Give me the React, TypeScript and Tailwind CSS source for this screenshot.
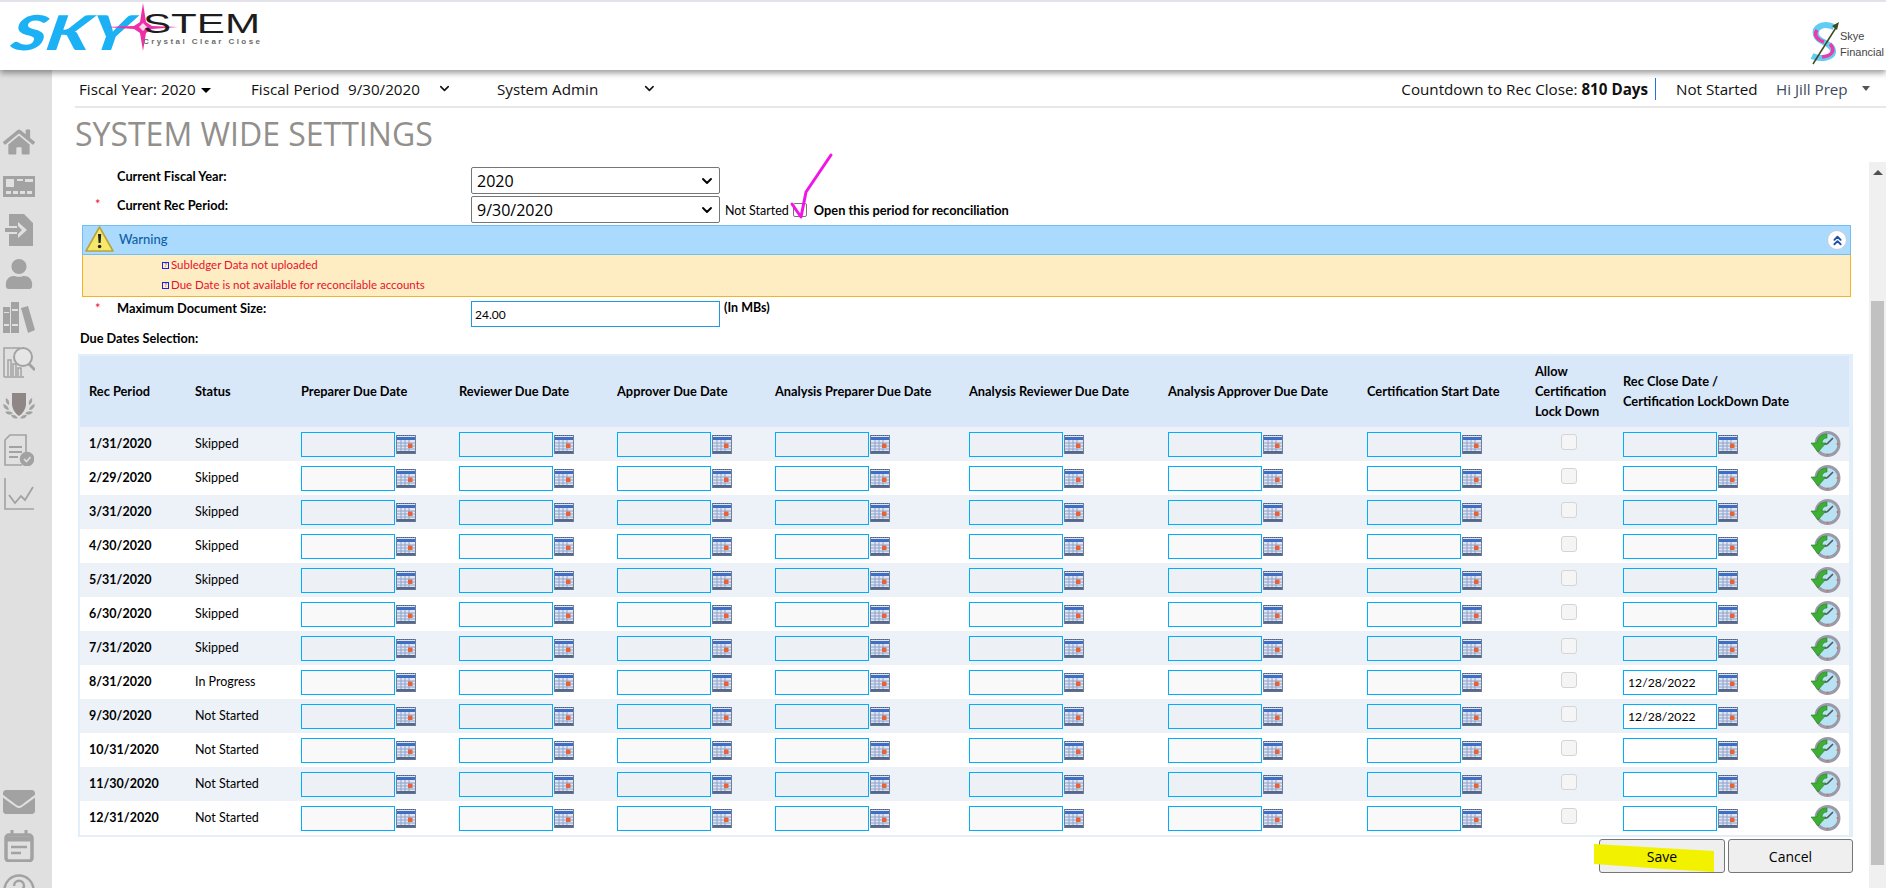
import { ChevronDown, ChevronsUp } from "lucide-react";
import { FaHome, FaUser, FaEnvelope } from "react-icons/fa";

const rows = [
  { period: "1/31/2020", status: "Skipped", close: "", closeOff: true },
  { period: "2/29/2020", status: "Skipped", close: "", closeOff: true },
  { period: "3/31/2020", status: "Skipped", close: "", closeOff: true },
  { period: "4/30/2020", status: "Skipped", close: "", closeOff: true },
  { period: "5/31/2020", status: "Skipped", close: "", closeOff: true },
  { period: "6/30/2020", status: "Skipped", close: "", closeOff: true },
  { period: "7/31/2020", status: "Skipped", close: "", closeOff: true },
  { period: "8/31/2020", status: "In Progress", close: "12/28/2022", closeOff: false },
  { period: "9/30/2020", status: "Not Started", close: "12/28/2022", closeOff: false },
  { period: "10/31/2020", status: "Not Started", close: "", closeOff: false },
  { period: "11/30/2020", status: "Not Started", close: "", closeOff: false },
  { period: "12/31/2020", status: "Not Started", close: "", closeOff: false },
];

const dateColumns = [0, 1, 2, 3, 4, 5, 6];

function SkyLogo() {
  return (
    <svg width="270" height="66" viewBox="0 0 270 66" className="ml-[6px] shrink-0 overflow-visible">
      <text x="12" y="48" fontFamily="Lato, sans-serif" fontWeight="900" fontStyle="italic" fontSize="48" fill="#1cb1f5" textLength="120" lengthAdjust="spacingAndGlyphs" transform="skewX(-10)">SKY</text>
      <polygon points="137,1 140,20 146,24 172,25 146,27 140,31 137,49 134,31 128,27 100,25 128,24 134,20" fill="#ee2fa8" />
      <polygon points="137,21 141,25 137,29 133,25" fill="#fbd3ec" />
      <text x="137" y="31" fontFamily="Liberation Sans, sans-serif" fontSize="27" fill="#1d1d1d" textLength="117" lengthAdjust="spacingAndGlyphs">STEM</text>
      <text x="137" y="42" fontFamily="Liberation Sans, sans-serif" fontSize="8" fontWeight="700" fill="#6b6b6b" textLength="117">Crystal Clear Close</text>
    </svg>
  );
}

function SkyeLogo() {
  return (
    <div className="flex items-center mt-[14px] w-[76px] shrink-0">
      <svg width="30" height="46" viewBox="0 0 30 46">
        <path d="M24 7 C12 2 4 8 6 15 C8 23 22 22 23 31 C24 38 10 40 2 36" fill="none" stroke="#62cdf3" strokeWidth="6" />
        <path d="M7 10 C3 16 8 20 14 22 M20 24 C26 30 22 36 12 37" fill="none" stroke="#ee3aa9" strokeWidth="3.5" />
        <path d="M3 44 L27 6" stroke="#3f4a22" strokeWidth="1.5" />
        <polygon points="29,2 22,6 27,10" fill="#3f4a22" />
      </svg>
      <div className="font-['Liberation_Sans',sans-serif] text-[11px] leading-[16px] text-[#444] pt-[1px]">
        <div>Skye</div>
        <div>Financial</div>
      </div>
    </div>
  );
}

function SideIcon({ children }: { children: React.ReactNode }) {
  return <div className="w-[32px] h-[32px] flex items-center justify-center text-[#a2a2a2]">{children}</div>;
}

function Sidebar() {
  return (
    <div className="w-[52px] shrink-0 bg-[#e0e0e0] flex flex-col pt-[56px] pl-[3px] gap-[12px] mb-[-18px]">
      <SideIcon><FaHome size={32} /></SideIcon>
      <SideIcon>
        <svg width="32" height="22" viewBox="0 0 32 22" fill="currentColor" className="mt-[2px]">
          <path d="M0 0h32v21H0z M3 3v8h8V3z M14 3v2h6V3z M22 3v3h8V3z M3 15v3h5v-3z M10 15v3h5v-3z M17 15v3h5v-3z M24 15v3h5v-3z" fillRule="evenodd" />
        </svg>
      </SideIcon>
      <SideIcon>
        <svg width="30" height="32" viewBox="0 0 30 32" fill="currentColor">
          <path d="M5 0h15l9 9v23H5V20h9v4l9-8-9-8v4H5z" />
          <path d="M1 14h12v-3l5 5-5 5v-3H1z" />
        </svg>
      </SideIcon>
      <SideIcon><FaUser size={30} /></SideIcon>
      <SideIcon>
        <svg width="32" height="32" viewBox="0 0 32 32" fill="currentColor">
          <path d="M0 5h7v26H0z M8 0h8v31H8z" />
          <path d="M18 6l7-2 7 24-7 3z" />
          <path d="M1 10h5v1H1z M1 22h5v2H1z M9 7h6v2H9z M9 22h6v2H9z" fill="#e0e0e0" />
        </svg>
      </SideIcon>
      <SideIcon>
        <svg width="32" height="32" viewBox="0 0 32 32" fill="none" stroke="currentColor" strokeWidth="1.5">
          <path d="M1 31V2h16" />
          <path d="M1 31h20" />
          <path d="M5 30V14h3v16M10 30V18h3v12M15 30V22h3v8" />
          <circle cx="20" cy="11" r="9" strokeWidth="2" fill="#e6e6e6" />
          <path d="M26 18l6 6" strokeWidth="3" />
        </svg>
      </SideIcon>
      <SideIcon>
        <svg width="32" height="26" viewBox="0 0 32 26" fill="currentColor">
          <path d="M9 0h14v12q-1 7-7 11q-6-4-7-11z" fill="#8f8686" />
          <path d="M3 5q4 2 3 7q-4-2-3-7z M0 11q5 1 6 6q-5 0-6-6z M2 19q4-2 8 1q-4 4-8-1z M8 22q4-1 7 3q-5 2-7-3z M29 5q-4 2-3 7q4-2 3-7z M32 11q-5 1-6 6q5 0 6-6z M30 19q-4-2-8 1q4 4 8-1z M24 22q-4-1-7 3q5 2 7-3z" />
        </svg>
      </SideIcon>
      <SideIcon>
        <svg width="30" height="32" viewBox="0 0 30 32" fill="none" stroke="currentColor" strokeWidth="1.6">
          <path d="M22 18V1H6L1 6v25h17" />
          <path d="M5 13h13M5 18h13M5 23h9" strokeWidth="2" />
          <circle cx="23" cy="25" r="6.5" fill="currentColor" />
          <path d="M20 25l2.5 2.5 4-4.5" stroke="#e0e0e0" strokeWidth="1.6" />
        </svg>
      </SideIcon>
      <SideIcon>
        <svg width="32" height="32" viewBox="0 0 32 32" fill="none" stroke="currentColor" strokeWidth="1.4">
          <path d="M2 0v31h29" strokeWidth="1.6" />
          <path d="M6 17l6 8 6-7 4 4 8-13" strokeWidth="1.8" />
        </svg>
      </SideIcon>
      <div className="mt-auto" />
      <SideIcon><FaEnvelope size={32} /></SideIcon>
      <SideIcon>
        <svg width="30" height="32" viewBox="0 0 30 32" fill="none" stroke="currentColor">
          <rect x="2" y="5" width="26" height="26" rx="3" strokeWidth="3.5" />
          <path d="M8 0v6M22 0v6" strokeWidth="3" />
          <path d="M2 9h26" strokeWidth="5" />
          <path d="M7 17h16" strokeWidth="2.5" />
          <path d="M7 23h10" strokeWidth="2.5" />
        </svg>
      </SideIcon>
      <SideIcon>
        <svg width="32" height="32" viewBox="0 0 32 32" fill="none" stroke="currentColor">
          <circle cx="16" cy="16" r="14.5" strokeWidth="2.4" />
          <path d="M11 12c0-7 10-7 10 0c0 4-5 4-5 8" strokeWidth="2.5" />
        </svg>
      </SideIcon>
    </div>
  );
}

function NavBar() {
  return (
    <div className="ml-[23px] h-[38px] border-b-2 border-[#e8e8e8] pl-[4px] pt-[2px] flex items-center text-[15.2px] text-[#111] font-['Open_Sans',sans-serif]">
      <div className="w-[172px] flex items-center gap-[5px]">
        <span>Fiscal Year: 2020</span>
        <span className="w-0 h-0 border-x-[5px] border-x-transparent border-t-[5px] border-t-black mt-[3px]" />
      </div>
      <span className="w-[97px] whitespace-nowrap">Fiscal Period</span>
      <div className="w-[149px] flex items-center">
        <span className="w-[89px]">9/30/2020</span>
        <ChevronDown size={15} strokeWidth={2.5} />
      </div>
      <div className="w-[160px] flex items-center">
        <span className="w-[147px]">System Admin</span>
        <ChevronDown size={15} strokeWidth={2.5} />
      </div>
      <div className="ml-auto flex items-center">
        <span>Countdown to Rec Close: <b>810 Days</b></span>
        <span className="w-px h-[22px] bg-[#1a73e8] ml-[7px] mr-[20px]" />
        <span className="w-[100px]">Not Started</span>
        <span className="text-[#3d4a5c] w-[86px]">Hi Jill Prep</span>
        <span className="w-0 h-0 border-x-[4.5px] border-x-transparent border-t-[5px] border-t-[#555] mr-[16px]" />
      </div>
    </div>
  );
}

function TopSelect({ value }: { value: string }) {
  return (
    <div className="relative w-[249px] h-[27px]">
      <select
        defaultValue={value}
        className="appearance-none w-full h-full border border-[#767676] rounded-[2px] bg-white pl-[5px] text-[16px] text-black font-['Open_Sans',sans-serif]"
      >
        <option>{value}</option>
      </select>
      <ChevronDown size={16} strokeWidth={2.8} className="absolute right-[5px] top-[6px] text-black" />
    </div>
  );
}

function WarningPanel() {
  const messages = ["Subledger Data not uploaded", "Due Date is not available for reconcilable accounts"];
  return (
    <div className="ml-[4px] mt-[2px] w-[1769px]">
      <div className="h-[30px] bg-[#aadafd] border border-[#74bdf0] flex items-center pl-[2px] pr-[3px]">
        <svg width="29" height="28" viewBox="0 0 29 28" className="mt-[-2px]">
          <path d="M14.5 2 L28 26 H1 Z" fill="#f8e869" stroke="#b9a33c" strokeWidth="1.6" strokeLinejoin="round" />
          <path d="M13 9h3.2l-.6 9h-2z" fill="#222" />
          <circle cx="14.6" cy="21.5" r="1.8" fill="#222" />
        </svg>
        <span className="ml-[5px] text-[13px] font-medium text-[#0e5fa6]">Warning</span>
        <div className="ml-auto w-[20px] h-[20px] rounded-full bg-white border border-[#c5c8e0] flex items-center justify-center">
          <ChevronsUp size={15} strokeWidth={3} className="text-[#1d4fa8]" />
        </div>
      </div>
      <div className="h-[42px] bg-[#feedc2] border-x border-b border-[#f0b429] pl-[79px]">
        {messages.map((message) => (
          <div key={message} className="h-[20px] flex items-center text-[11.5px] text-[#e8112d]">
            <span className="w-[7px] h-[7px] border border-[#2222dd] text-[5px] leading-[5px] text-center text-[#2222dd] mr-[2px] shrink-0">?</span>
            {message}
          </div>
        ))}
      </div>
    </div>
  );
}

function CalendarIcon() {
  return (
    <svg width="20" height="19" viewBox="0 0 20 19" className="ml-px shrink-0">
      <rect x="0.5" y="0.5" width="19" height="18" fill="#dfe5f2" stroke="#6f7f9c" />
      <path d="M1 .5h18" stroke="#555e70" strokeDasharray="1 1" />
      <rect x="1" y="2" width="18" height="3" fill="#3f6fc4" />
      <path d="M1 8h18M1 11h18M1 14h18M5 5v11M9 5v11M13 5v11" stroke="#8ea2c9" strokeWidth="1" />
      <rect x="1" y="16" width="18" height="2.5" fill="#566889" />
      <rect x="12" y="8.5" width="4.5" height="4.5" fill="#e5633c" />
    </svg>
  );
}

function ClockIcon() {
  return (
    <svg width="31" height="27" viewBox="0 0 31 27">
      <circle cx="17.5" cy="13" r="11.5" fill="#b7e3f5" stroke="#9a9aa8" strokeWidth="3" />
      <path d="M17 13l6-6M17 13h-4" stroke="#555" strokeWidth="1.6" />
      <circle cx="17.5" cy="23.5" r="1" fill="#e5633c" />
      <circle cx="27.5" cy="13" r="1" fill="#e5633c" />
      <path d="M17 3 C10 3 7 8 7 12 L1 12 L8 21 L16 12 L12 12 C12 9 14 7 17 7 Z" fill="#3fae35" stroke="#1f7f1c" strokeWidth="0.6" />
    </svg>
  );
}

function DateInput({ value, disabled, light }: { value: string; disabled: boolean; light: boolean }) {
  const bg = disabled ? (light ? "bg-[#f9f9f9]" : "bg-[#edf1f5]") : "bg-white";
  return (
    <div className="flex items-center">
      <input
        readOnly
        value={value}
        className={`w-[94px] h-[25px] border border-[#00aeff] pl-[4px] text-[12.2px] text-black ${bg}`}
      />
      <CalendarIcon />
    </div>
  );
}

function DueDatesTable() {
  const headClass = "text-left font-bold text-[12.8px] leading-[20px] pb-[1px]";
  return (
    <table className="table-fixed w-[1775px] border-separate border-spacing-0 border-l-2 border-r-4 border-y-2 border-[#e2eefa]">
      <colgroup>
        <col className="w-[115px]" />
        <col className="w-[106px]" />
        <col className="w-[158px]" />
        <col className="w-[158px]" />
        <col className="w-[158px]" />
        <col className="w-[194px]" />
        <col className="w-[199px]" />
        <col className="w-[199px]" />
        <col className="w-[168px]" />
        <col className="w-[88px]" />
        <col className="w-[177px]" />
        <col className="w-[49px]" />
      </colgroup>
      <thead>
        <tr className="h-[71px] bg-[#d9e8f9]">
          <th className={`${headClass} pl-[9px]`}>Rec Period</th>
          <th className={headClass}>Status</th>
          <th className={headClass}>Preparer Due Date</th>
          <th className={headClass}>Reviewer Due Date</th>
          <th className={headClass}>Approver Due Date</th>
          <th className={headClass}>Analysis Preparer Due Date</th>
          <th className={headClass}>Analysis Reviewer Due Date</th>
          <th className={headClass}>Analysis Approver Due Date</th>
          <th className={headClass}>Certification Start Date</th>
          <th className={headClass}>Allow<br />Certification<br />Lock Down</th>
          <th className={`${headClass} whitespace-nowrap`}>Rec Close Date /<br />Certification LockDown Date</th>
          <th />
        </tr>
      </thead>
      <tbody>
        {rows.map((row, i) => (
          <tr key={row.period} className={`h-[34px] ${i % 2 === 0 ? "bg-[#edf2f9]" : "bg-white"}`}>
            <td className="pl-[9px] pt-[1px] font-bold text-[12.5px]">{row.period}</td>
            <td className="pt-[1px] text-[12.5px]">{row.status}</td>
            {dateColumns.map((c) => (
              <td key={c}><DateInput value="" disabled light={i % 2 === 1} /></td>
            ))}
            <td className="pl-[26px]">
              <input type="checkbox" disabled className="appearance-none block w-[16px] h-[16px] mb-[5px] rounded-[3px] border border-[#d4d4d4] bg-[#f5f5f5]" />
            </td>
            <td><DateInput value={row.close} disabled={row.closeOff} light={i % 2 === 1} /></td>
            <td className="pl-[10px]"><ClockIcon /></td>
          </tr>
        ))}
      </tbody>
    </table>
  );
}

function Scrollbar() {
  return (
    <div className="w-[17px] shrink-0 bg-[#f0f0f0] relative flex flex-col items-center">
      <span className="mt-[8px] w-0 h-0 border-x-[5px] border-x-transparent border-b-[5px] border-b-[#505050]" />
      <div className="mt-[126px] w-[13px] h-[564px] bg-[#c1c1c1]" />
    </div>
  );
}

export default function App() {
  return (
    <div className="w-full h-[888px] overflow-hidden flex flex-col bg-white text-black font-['Lato',sans-serif]">
      <header className="relative z-10 h-[70px] shrink-0 border-t-2 border-[#e2e2e8] bg-white flex justify-between shadow-[0_3px_6px_rgba(0,0,0,0.4)]">
        <SkyLogo />
        <SkyeLogo />
      </header>
      <div className="flex-1 flex min-h-0">
        <Sidebar />
        <main className="flex-1 min-w-0 flex flex-col">
          <NavBar />
          <h1 className="ml-[23px] h-[54px] pt-[6px] text-[32px] leading-[40px] text-[#928f8c] font-['Open_Sans',sans-serif]">SYSTEM WIDE SETTINGS</h1>
          <div className="flex-1 flex min-h-0">
            <div className="flex-1 min-w-0 pl-[26px] pt-[5px]">
              <div className="flex pl-[39px] h-[27px]">
                <label className="w-[354px] text-[12.8px] font-bold leading-[18px]">Current Fiscal Year:</label>
                <TopSelect value="2020" />
              </div>
              <div className="flex h-[27px] mt-[2px] pl-[17px]">
                <span className="w-[22px] text-[13px] text-[#e8112d] leading-[16px]">*</span>
                <label className="w-[354px] text-[12.8px] font-bold leading-[18px]">Current Rec Period:</label>
                <TopSelect value="9/30/2020" />
                <span className="ml-[5px] text-[12.5px] leading-[29px]">Not Started</span>
                <span className="relative ml-[4px] mt-[7px]">
                  <input type="checkbox" className="appearance-none block w-[14px] h-[14px] rounded-[2px] border border-[#767676] bg-white" />
                  <svg width="44" height="68" viewBox="0 0 44 68" className="absolute left-[-2px] top-[-52px] overflow-visible">
                    <path d="M1 53 L10 66 L15 41 L40 4" fill="none" stroke="#f116e4" strokeWidth="3" strokeLinejoin="round" strokeLinecap="round" />
                  </svg>
                </span>
                <span className="ml-[7px] text-[12.8px] font-bold leading-[29px]">Open this period for reconciliation</span>
              </div>
              <WarningPanel />
              <div className="flex h-[26px] mt-[4px] pl-[17px]">
                <span className="w-[22px] text-[13px] text-[#e8112d] leading-[14px]">*</span>
                <label className="w-[354px] text-[12.8px] font-bold leading-[14px]">Maximum Document Size:</label>
                <input readOnly value="24.00" className="w-[249px] h-[26px] border border-[#1e9be0] pl-[3px] text-[12px]" />
                <span className="ml-[4px] text-[12.5px] font-bold leading-[14px]">(In MBs)</span>
              </div>
              <div className="h-[27px] pl-[2px] text-[12.7px] font-bold leading-[22px]">Due Dates Selection:</div>
              <DueDatesTable />
              <div className="flex justify-end w-[1775px] gap-[3px] mt-[2px] font-['Open_Sans',sans-serif] text-[14px]">
                <button className="relative w-[126px] h-[34px] border border-[#767676] rounded-[3px] bg-[#efefef]">
                  <svg width="120" height="28" viewBox="0 0 120 28" className="absolute left-[-6px] top-[4px]">
                    <polygon points="0,0 120,7 120,28 70,25 0,20" fill="#f2f200" />
                  </svg>
                  <span className="relative">Save</span>
                </button>
                <button className="w-[125px] h-[34px] border border-[#767676] rounded-[3px] bg-[#efefef]">Cancel</button>
              </div>
            </div>
            <Scrollbar />
          </div>
        </main>
      </div>
    </div>
  );
}
